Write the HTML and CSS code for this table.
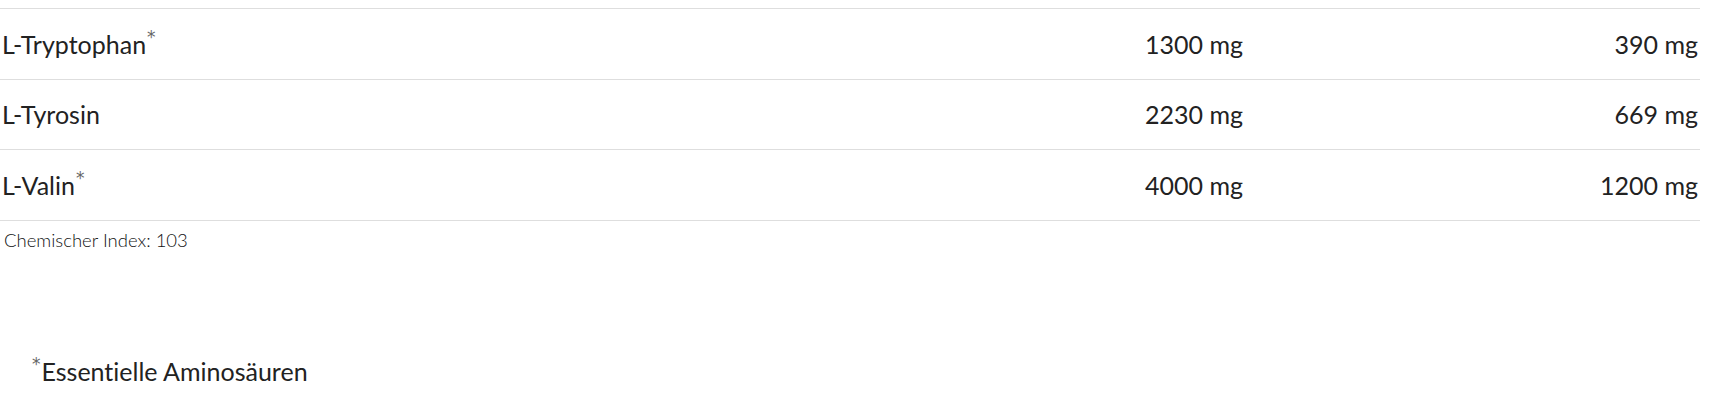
FILE: index.html
```html
<!DOCTYPE html>
<html lang="de">
<head>
<meta charset="utf-8">
<link rel="stylesheet" href="styles.css">
</head>
<body>
<div class="page">
  <div class="table">
    <div class="row">
      <div class="cell name">L-Tryptophan<sup class="ess">*</sup></div>
      <div class="cell val">1300 mg</div>
      <div class="cell val">390 mg</div>
    </div>
    <div class="row">
      <div class="cell name">L-Tyrosin</div>
      <div class="cell val">2230 mg</div>
      <div class="cell val">669 mg</div>
    </div>
    <div class="row">
      <div class="cell name">L-Valin<sup class="ess">*</sup></div>
      <div class="cell val">4000 mg</div>
      <div class="cell val">1200 mg</div>
    </div>
  </div>
  <p class="index">Chemischer Index: 103</p>
  <p class="note"><sup class="ess">*</sup>Essentielle Aminosäuren</p>
</div>
</body>
</html>
```

FILE: styles.css
```css
html, body {
  margin: 0;
  padding: 0;
  background: #ffffff;
}

body {
  font-family: Lato, "Noto Sans", sans-serif;
  font-weight: 400;
  color: #222222;
  font-variant-ligatures: none;
}

.page {
  padding-top: 8px;
  width: 1700px;
}

.table {
  border-top: 1px solid #dedede;
}

.row {
  display: grid;
  grid-template-columns: 1fr 455px 455px;
  align-items: center;
  height: 70.67px;
  box-sizing: border-box;
  border-bottom: 1px solid #dedede;
}

.cell {
  font-size: 25px;
  line-height: 30px;
}

.name {
  padding-left: 2px;
}

.val {
  text-align: right;
  padding-right: 2px;
}

.ess {
  font-family: "DejaVu Sans", sans-serif;
  font-weight: 400;
  font-size: 17px;
  color: #666666;
  vertical-align: top;
  line-height: 1;
  position: relative;
  top: 0;
  margin-left: 1px;
}

.index {
  margin: 0;
  padding: 7px 0 0 4px;
  font-size: 18.5px;
  font-weight: 300;
  color: #111111;
  line-height: 24px;
}

.note {
  margin: 104px 0 0 32px;
  font-size: 25px;
  line-height: 30px;
}

.note .ess {
  margin-left: 0;
  margin-right: 1px;
}
```
